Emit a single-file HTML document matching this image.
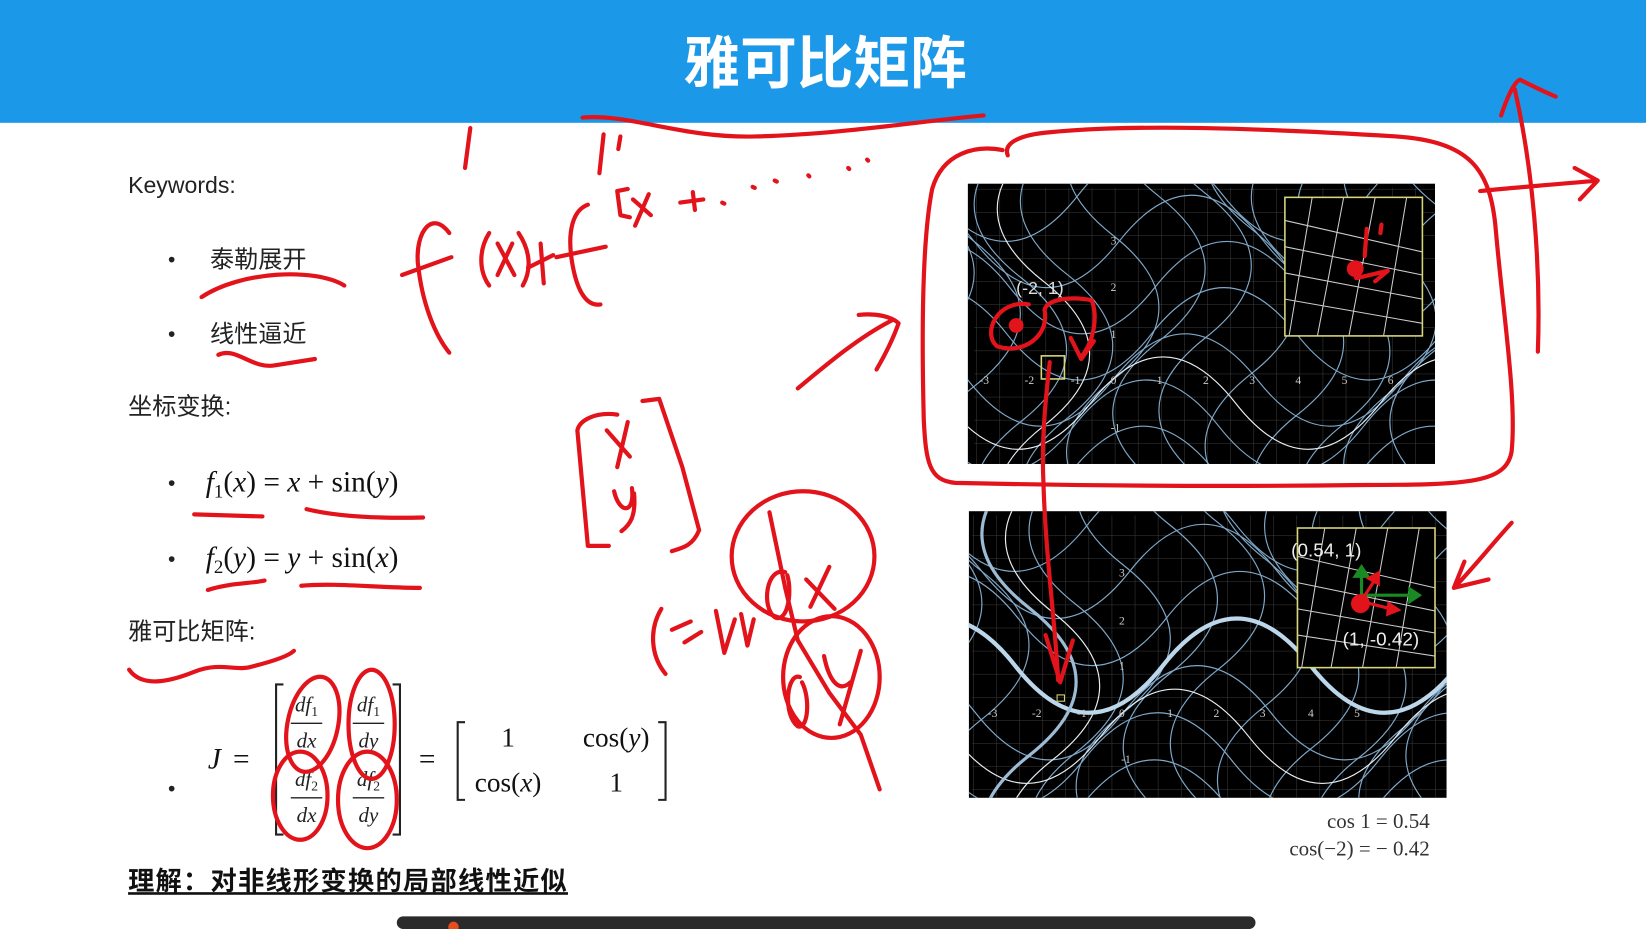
<!DOCTYPE html>
<html><head><meta charset="utf-8"><style>
html,body{margin:0;padding:0;background:#fff;overflow:hidden;width:1646px;height:929px}
svg{display:block;position:absolute;left:0;top:0}
.cj{font-family:"Liberation Sans","Noto Sans CJK SC",sans-serif}
.m{font-family:"Liberation Serif","DejaVu Serif",serif}
.r{fill:none;stroke:#e3131b;stroke-width:4;stroke-linecap:round;stroke-linejoin:round}
</style></head><body>
<svg width="1646" height="929" viewBox="0 0 1568 885" preserveAspectRatio="none" xmlns="http://www.w3.org/2000/svg">
<defs>
<path id="h" d="M-828 0 Q-759 -88 -690 0 T-552 0 T-414 0 T-276 0 T-138 0 T0 0 T138 0 T276 0 T414 0 T552 0 T690 0 T828 0"/>
<path id="v" d="M0 828 Q88 759 0 690 T0 552 T0 414 T0 276 T0 138 T0 0 T0 -138 T0 -276 T0 -414 T0 -552 T0 -690 T0 -828"/>
<g id="curves" fill="none">
<g stroke="#7fa8c8" stroke-width="1.1">
<use href="#h" transform="translate(33,176)"/><use href="#h" transform="translate(-6,132)"/><use href="#h" transform="translate(-40,88)"/><use href="#h" transform="translate(-37,44)"/><use href="#h" transform="translate(0,0)"/><use href="#h" transform="translate(37,-44)"/><use href="#h" transform="translate(40,-88)"/><use href="#h" transform="translate(6,-132)"/><use href="#h" transform="translate(-33,-176)"/>
<use href="#v" transform="translate(-176,-33)"/><use href="#v" transform="translate(-132,6)"/><use href="#v" transform="translate(-88,40)"/><use href="#v" transform="translate(-44,37)"/><use href="#v" transform="translate(0,0)"/><use href="#v" transform="translate(44,-37)"/><use href="#v" transform="translate(88,-40)"/><use href="#v" transform="translate(132,-6)"/><use href="#v" transform="translate(176,33)"/><use href="#v" transform="translate(220,42)"/><use href="#v" transform="translate(264,12)"/><use href="#v" transform="translate(308,-29)"/>
</g>
<g stroke="#e8eef2" stroke-width="1.1">
<use href="#h" transform="translate(-21,22)"/><use href="#v" transform="translate(-66,44)"/>
</g>
</g>
<pattern id="grid" width="22" height="22" patternUnits="userSpaceOnUse"><path d="M0 0H22M0 0V22" stroke="#3c3c3c" stroke-width="1" fill="none"/></pattern>
<clipPath id="c1"><rect x="922" y="175" width="445" height="267"/></clipPath>
<clipPath id="c2"><rect x="923" y="487" width="455" height="273"/></clipPath>
</defs>
<rect x="0" y="0" width="1568" height="117" fill="#1b98e8"/>
<text x="786" y="79" text-anchor="middle" class="cj" font-size="54" font-weight="bold" fill="#fff">雅可比矩阵</text>

<text x="122" y="184" class="cj" font-size="22" fill="#222">Keywords:</text>
<text x="160" y="254" class="cj" font-size="20" fill="#222">•</text><text x="200" y="255" class="cj" font-size="23" fill="#222">泰勒展开</text>
<text x="160" y="325" class="cj" font-size="20" fill="#222">•</text><text x="200" y="326" class="cj" font-size="23" fill="#222">线性逼近</text>
<text x="122" y="395" class="cj" font-size="23" fill="#222">坐标变换:</text>
<text x="160" y="467" class="cj" font-size="20" fill="#222">•</text>
<text x="196" y="468" class="m" font-size="28" fill="#111"><tspan font-style="italic">f</tspan><tspan font-size="18" dy="6">1</tspan><tspan dy="-6">(</tspan><tspan font-style="italic">x</tspan>) = <tspan font-style="italic">x</tspan> + sin(<tspan font-style="italic">y</tspan>)</text>
<text x="160" y="539" class="cj" font-size="20" fill="#222">•</text>
<text x="196" y="540" class="m" font-size="28" fill="#111"><tspan font-style="italic">f</tspan><tspan font-size="18" dy="6">2</tspan><tspan dy="-6">(</tspan><tspan font-style="italic">y</tspan>) = <tspan font-style="italic">y</tspan> + sin(<tspan font-style="italic">x</tspan>)</text>
<text x="122" y="609" class="cj" font-size="23" fill="#222">雅可比矩阵:</text>
<text x="160" y="758" class="cj" font-size="20" fill="#222">•</text>
<text x="198" y="732" class="m" font-size="28" fill="#111" font-style="italic">J</text><text x="222" y="732" class="m" font-size="28" fill="#111">=</text>
<path d="M270 652 H263 V795 H270 M374 652 H381 V795 H374" stroke="#222" stroke-width="2" fill="none"/>
<g class="m" font-size="20" fill="#222" font-style="italic" text-anchor="middle">
<text x="292" y="678">df<tspan font-size="13" font-style="normal" dy="4">1</tspan></text><text x="292" y="712">dx</text>
<text x="351" y="678">df<tspan font-size="13" font-style="normal" dy="4">1</tspan></text><text x="351" y="712">dy</text>
<text x="292" y="749">df<tspan font-size="13" font-style="normal" dy="4">2</tspan></text><text x="292" y="783">dx</text>
<text x="351" y="749">df<tspan font-size="13" font-style="normal" dy="4">2</tspan></text><text x="351" y="783">dy</text>
</g>
<path d="M277 689H307M336 689H366M277 760H307M336 760H366" stroke="#222" stroke-width="1.3"/>
<text x="399" y="732" class="m" font-size="28" fill="#111">=</text>
<path d="M443 688 H436 V762 H443 M627 688 H634 V762 H627" stroke="#222" stroke-width="2" fill="none"/>
<g class="m" font-size="26" fill="#111" text-anchor="middle">
<text x="484" y="711">1</text><text x="587" y="711">cos(<tspan font-style="italic">y</tspan>)</text>
<text x="484" y="754">cos(<tspan font-style="italic">x</tspan>)</text><text x="587" y="754">1</text>
</g>
<text x="122" y="848" class="cj" font-size="25" font-weight="bold" fill="#111" letter-spacing="1.2" text-decoration="underline">理解：对非线形变换的局部线性近似</text>

<rect x="922" y="175" width="445" height="267" fill="#000"/>
<g clip-path="url(#c1)">
<rect x="922" y="175" width="445" height="267" fill="url(#grid)" transform="translate(6,4)"/>
<g transform="translate(1060,362)"><use href="#curves"/></g>
<g class="m" font-size="11" fill="#ccc"><text x="933" y="366">-3</text><text x="976" y="366">-2</text><text x="1020" y="366">-1</text><text x="1058" y="366">0</text><text x="1102" y="366">1</text><text x="1146" y="366">2</text><text x="1190" y="366">3</text><text x="1234" y="366">4</text><text x="1278" y="366">5</text><text x="1322" y="366">6</text><text x="1058" y="233">3</text><text x="1058" y="277">2</text><text x="1058" y="322">1</text><text x="1058" y="411">-1</text></g>
<rect x="1224" y="188" width="131" height="132" fill="#000" stroke="#d8d67a" stroke-width="1.5"/>
<g stroke="#ccc" stroke-width="1" fill="none"><path d="M1224 210 L1355 240M1224 235 L1355 262M1224 260 L1355 285M1224 285 L1355 308M1250 188 L1228 320M1280 188 L1255 320M1310 188 L1285 320M1340 188 L1318 320"/></g>
<rect x="992" y="339" width="22" height="22" fill="none" stroke="#d8d67a" stroke-width="1.5"/>
<text x="968" y="280" class="cj" font-size="17" fill="#ddd">(-2, 1)</text>
</g>
<rect x="923" y="487" width="455" height="273" fill="#000"/>
<g clip-path="url(#c2)">
<rect x="923" y="487" width="455" height="273" fill="url(#grid)" transform="translate(3,4)"/>
<g transform="translate(1070,679) scale(1.02)"><use href="#curves"/>
<use href="#h" transform="translate(37,-44)" stroke="#bcd6ea" stroke-width="4" fill="none"/>
<use href="#v" transform="translate(-88,40)" stroke="#9cbcd6" stroke-width="3" fill="none"/></g>
<g class="m" font-size="11" fill="#ccc"><text x="941" y="683">-3</text><text x="983" y="683">-2</text><text x="1026" y="683">-1</text><text x="1066" y="683">0</text><text x="1112" y="683">1</text><text x="1156" y="683">2</text><text x="1200" y="683">3</text><text x="1246" y="683">4</text><text x="1290" y="683">5</text><text x="1066" y="549">3</text><text x="1066" y="595">2</text><text x="1066" y="638">1</text><text x="1068" y="727">-1</text></g>
<rect x="1236" y="503" width="131" height="133" fill="#000" stroke="#d8d67a" stroke-width="1.5"/>
<g stroke="#ccc" stroke-width="1" fill="none"><path d="M1236 530 L1367 560M1236 555 L1367 582M1236 580 L1367 603M1236 605 L1367 625M1262 503 L1240 636M1292 503 L1268 636M1322 503 L1298 636M1352 503 L1330 636"/></g>
<rect x="1007" y="662" width="7" height="6" fill="none" stroke="#d8d67a"/>
<text x="1230" y="530" class="cj" font-size="18" fill="#eee">(0.54, 1)</text>
<text x="1279" y="615" class="cj" font-size="18" fill="#eee">(1, -0.42)</text>
<g stroke="#1a8a22" stroke-width="3" fill="#1a8a22"><path d="M1297 573 V545"/><path d="M1297 540 l-6 9 h12z"/><path d="M1297 567 H1345"/><path d="M1352 567 l-9 -6 v12z"/></g>
<g stroke="#e3131b" stroke-width="3" fill="#e3131b"><path d="M1297 572 L1310 552"/><path d="M1313 546 l-9 5 9 5z"/><path d="M1297 573 L1325 580"/><path d="M1332 581 l-9 -6 -1 10z"/></g>
<circle cx="1296" cy="575" r="9" fill="#e3131b"/>
</g>
<g class="m" font-size="20" fill="#333" text-anchor="end"><text x="1362" y="789">cos 1 = 0.54</text><text x="1362" y="815">cos(−2) = − 0.42</text></g>

<rect x="378" y="873" width="818" height="12" rx="6" fill="#2b2b2b"/>
<circle cx="432" cy="883" r="5" fill="#e84c1e"/>

<g class="r">
<path d="M555 112 C 600 108 650 132 720 130 C 800 128 880 115 937 110"/>
<path d="M960 148 C 955 135 975 128 1000 126 C 1080 118 1200 122 1330 130 C 1400 135 1420 160 1425 220 C 1432 300 1445 380 1440 430 C 1435 460 1400 462 1300 462 C 1150 464 1000 462 910 460 C 885 458 882 440 880 400 C 878 320 878 230 888 180 C 898 145 930 138 955 143"/>
<path d="M760 370 C 790 345 820 320 850 305 M818 300 C 835 298 850 302 856 308 C 850 325 842 340 835 352"/>
<path d="M1465 335 C 1468 250 1460 160 1443 85 M1430 110 C 1435 95 1442 78 1448 76 C 1460 82 1472 88 1482 92"/>
<path d="M1410 182 C 1450 178 1490 175 1522 172 M1500 160 L1522 172 L1505 190"/>
<path d="M1000 345 C 996 380 992 420 994 460 C 996 530 1005 590 1008 648 M996 605 L1010 650 L1022 610"/>
<path d="M1440 498 C 1420 520 1400 545 1385 560 M1395 535 L1385 560 L1418 552"/>
<path d="M980 290 C 950 285 935 318 950 330 C 975 338 1000 320 995 295 C 998 285 1020 282 1040 286 C 1046 302 1042 325 1030 340 M1020 322 L1030 342 L1042 325"/>
<circle cx="968" cy="310" r="5" fill="#e3131b"/>
<path d="M1302 218 L1300 244 M1290 250 L1292 265 L1322 258 L1310 268 M1316 214 L1315 222"/>
<circle cx="1291" cy="256" r="6" fill="#e3131b"/>
<path d="M428 222 C 412 200 396 220 398 250 C 402 290 415 320 428 336 M383 262 L 430 245 M448 122 L443 160"/>
<path d="M466 222 C 456 238 456 258 466 272 M474 232 L490 262 M488 232 L474 262 M494 222 C 506 240 506 258 498 272"/>
<path d="M503 255 L527 243 M515 232 L518 270"/>
<path d="M560 195 C 546 200 540 220 545 250 C 550 280 560 292 572 290 M530 245 L577 235 M575 128 L571 165 M591 130 L589 142"/>
<path d="M598 180 L588 182 L591 205 L600 207 M603 190 L620 205 M618 185 L605 215"/>
<path d="M648 193 L670 190 M660 183 L662 200"/>
<path d="M688 193 L690 194 M717 178 L719 179 M738 172 L740 173 M770 167 L771 168 M808 160 L809 161 M826 152 L827 153"/>
<path d="M588 395 C 568 392 552 400 550 410 L560 520 L580 520 M612 382 L628 380 L650 445 L666 505 C 660 520 650 522 640 525"/>
<path d="M578 410 L600 435 M598 402 L588 445 M585 468 C 590 490 605 490 602 465 M604 470 C 606 492 600 500 592 506"/>
<ellipse cx="765" cy="530" rx="68" ry="62"/>
<ellipse cx="792" cy="645" rx="46" ry="58"/>
<path d="M733 488 L748 560 L760 610 L790 660 L820 700 L838 752"/>
<path d="M748 545 C 730 540 725 578 738 588 C 750 594 755 565 750 548 M768 552 L795 580 M790 540 L772 578"/>
<path d="M762 645 C 750 640 745 680 760 692 C 770 695 772 665 764 650 M785 625 C 790 650 800 660 810 650 M820 620 L800 690"/>
<path d="M630 580 C 618 600 620 625 634 642 M640 600 L658 592 M652 612 L668 602 M682 582 L690 622 L700 590 M706 585 L712 615 L718 590"/>
<path d="M192 283 C 230 258 300 255 328 272"/>
<path d="M208 338 C 225 330 240 352 262 348 L300 342"/>
<path d="M185 490 L250 492 M292 485 C 320 492 360 494 403 493"/>
<path d="M198 562 C 220 555 240 556 252 553 M287 558 C 320 555 360 560 400 560"/>
<path d="M123 638 C 135 655 160 650 185 640 C 210 630 225 640 240 635 C 260 630 275 625 280 620"/>
<ellipse cx="298" cy="690" rx="24" ry="46" transform="rotate(12 298 690)"/>
<ellipse cx="354" cy="690" rx="22" ry="52"/>
<ellipse cx="286" cy="758" rx="26" ry="42"/>
<ellipse cx="350" cy="762" rx="28" ry="46"/>
</g>
</svg>
</body></html>
